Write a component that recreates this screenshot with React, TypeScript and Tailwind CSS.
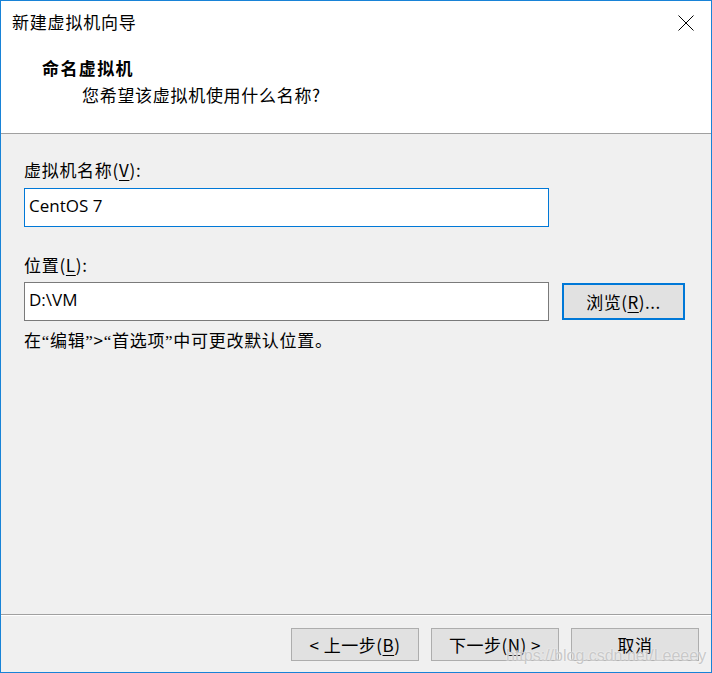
const cjk = { fontFamily: '"Noto Sans CJK SC", "Noto Sans", sans-serif' }
const latin = { fontFamily: '"Segoe UI", "Open Sans", "Liberation Sans", sans-serif' }

function Mn({ k }: { k: string }) {
  return <span className="underline underline-offset-[3px] decoration-1">{k}</span>
}

// narrow curly quote, like the dialog's font draws it
function Q({ c }: { c: string }) {
  return <span style={{ fontFamily: '"Liberation Serif", serif' }}>{c}</span>
}

export default function App() {
  return (
    <div
      className="relative w-[712px] h-[673px] border border-[#1883d7] bg-[#f0f0f0] flex flex-col text-black overflow-hidden"
      style={cjk}
    >
      {/* Header */}
      <div className="bg-white h-[132px] shrink-0">
        <div className="h-[42px] flex items-center justify-between pl-[11px] pr-[17px]">
          <span className="text-[17px] tracking-[0.8px]">新建虚拟机向导</span>
          <svg width="16" height="16" viewBox="0 0 16 16" className="mt-[1px]">
            <path d="M0.5 0.5 L15.5 15.5 M15.5 0.5 L0.5 15.5" stroke="#000" strokeWidth="1" fill="none" />
          </svg>
        </div>
        <div className="pl-[41px] mt-[13px]">
          <p className="text-[17px] leading-[24px] font-bold tracking-[1.4px]">命名虚拟机</p>
          <p className="text-[17px] leading-[24px] tracking-[0.7px] pl-[40px] mt-[3px]">您希望该虚拟机使用什么名称?</p>
        </div>
      </div>
      <div className="h-px bg-[#a0a0a0] shrink-0" />

      {/* Body */}
      <div className="flex-1 px-[23px] pt-[24px]">
        <p className="text-[17px] leading-[24px] tracking-[0.7px]">
          虚拟机名称(<Mn k="V" />):
        </p>
        <div className="mt-[6px] w-[525px] h-[39px] bg-white border border-[#0078d7] px-[4px] pt-[4px]">
          <span className="text-[17px] leading-[24px]" style={latin}>CentOS 7</span>
        </div>

        <p className="text-[17px] leading-[24px] tracking-[0.7px] mt-[26px]">
          位置(<Mn k="L" />):
        </p>
        <div className="mt-[5px] flex items-center gap-[13px]">
          <div className="w-[525px] h-[39px] bg-white border border-[#7a7a7a] px-[4px] pt-[4px]">
            <span className="text-[17px] leading-[24px]" style={latin}>D:\VM</span>
          </div>
          <button className="w-[123px] h-[37px] bg-[#e1e1e1] border-2 border-[#0078d7] text-[17px] tracking-[0.5px] flex items-center justify-center">
            浏览(<Mn k="R" />)...
          </button>
        </div>
        <p className="text-[17px] leading-[24px] tracking-[0.7px] mt-[7px]">
          在<Q c="“" />编辑<Q c="”" />&gt;<Q c="“" />首选项<Q c="”" />中可更改默认位置。
        </p>
      </div>

      {/* Footer */}
      <div className="shrink-0">
        <div className="h-px bg-[#a0a0a0]" />
        <div className="h-px bg-white" />
        <div className="flex justify-end gap-[12px] pr-[12px] pt-[12px] pb-[11px]">
          <button className="w-[128px] h-[33px] bg-[#e1e1e1] border border-[#adadad] text-[17px] tracking-[0.5px] flex items-center justify-center">
            &lt; 上一步(<Mn k="B" />)
          </button>
          <button className="w-[128px] h-[33px] bg-[#e1e1e1] border border-[#adadad] text-[17px] tracking-[0.5px] flex items-center justify-center">
            下一步(<Mn k="N" />) &gt;
          </button>
          <button className="w-[128px] h-[33px] bg-[#e1e1e1] border border-[#adadad] text-[17px] tracking-[0.5px] flex items-center justify-center">
            取消
          </button>
        </div>
      </div>

      {/* Watermark */}
      <span
        className="absolute left-[505px] top-[643px] text-[16px] text-[#c9c9c9] pointer-events-none [text-shadow:0_0_2px_#ffffff]"
        style={{ fontFamily: '"Liberation Sans", Arial, sans-serif' }}
      >
        https://blog.csdn.net/Leeeey
      </span>
    </div>
  )
}
